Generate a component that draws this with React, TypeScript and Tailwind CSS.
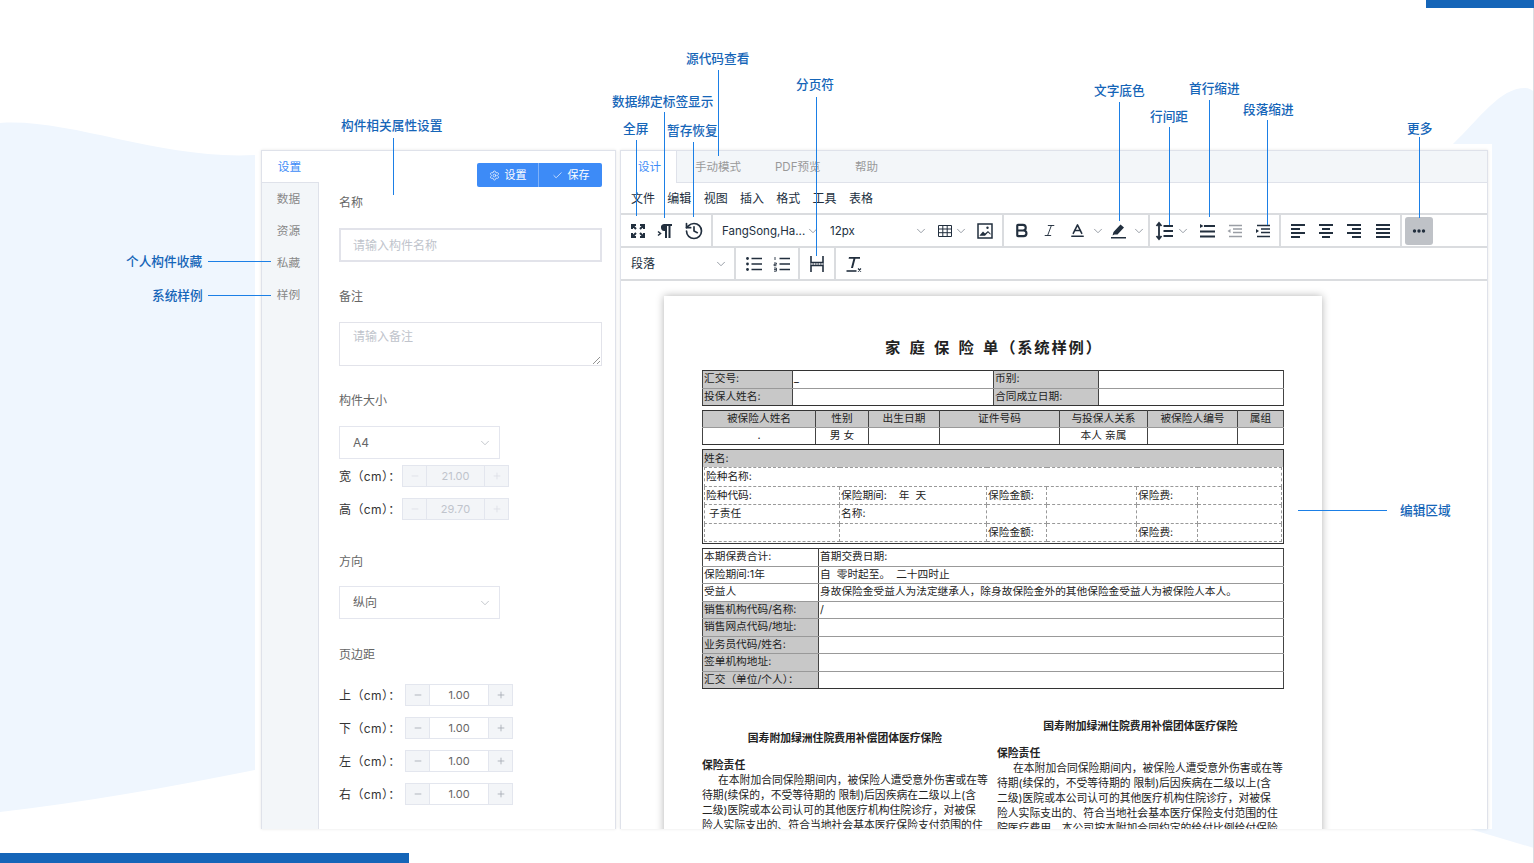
import React from 'react';
import { Bold, Italic, Baseline, ChevronDown, History, Settings, Check, Minus, Plus } from 'lucide-react';

const ink = '#222f3e';

function Glyph({ children }: { children: React.ReactNode }) {
  return (
    <svg width="24" height="24" viewBox="0 0 24 24" fill="none" stroke={ink} strokeWidth="2">
      {children}
    </svg>
  );
}

function Tool({ children, className = '' }: { children: React.ReactNode; className?: string }) {
  return <div className={`flex h-[28px] w-[28px] shrink-0 items-center justify-center ${className}`}>{children}</div>;
}

function Chevron({ size = 14 }: { size?: number }) {
  return <ChevronDown size={size} strokeWidth={1.5} className="shrink-0 text-[#8a919a]" />;
}

function Lines({ rows }: { rows: [number, number, number][] }) {
  return (
    <Glyph>
      {rows.map(([y, a, b]) => (
        <path key={y} d={`M${a} ${y}H${b}`} />
      ))}
    </Glyph>
  );
}

const annotations = [
  { text: '构件相关属性设置', x: 341, y: 117 },
  { text: '源代码查看', x: 686, y: 50 },
  { text: '数据绑定标签显示', x: 612, y: 93 },
  { text: '全屏', x: 623, y: 120 },
  { text: '暂存恢复', x: 667, y: 122 },
  { text: '分页符', x: 796, y: 76 },
  { text: '文字底色', x: 1094, y: 82 },
  { text: '行间距', x: 1150, y: 108 },
  { text: '首行缩进', x: 1189, y: 80 },
  { text: '段落缩进', x: 1243, y: 101 },
  { text: '更多', x: 1407, y: 120 },
  { text: '个人构件收藏', x: 126, y: 253 },
  { text: '系统样例', x: 152, y: 287 },
  { text: '编辑区域', x: 1400, y: 502 },
];

// leader lines, x/y/w/h in page pixels
const leaders = [
  { x: 393, y: 138, w: 1, h: 57 },
  { x: 718, y: 70, w: 1, h: 86 },
  { x: 664, y: 112, w: 1, h: 106 },
  { x: 636, y: 140, w: 1, h: 76 },
  { x: 693, y: 142, w: 1, h: 75 },
  { x: 816, y: 97, w: 1, h: 159 },
  { x: 1119, y: 102, w: 1, h: 119 },
  { x: 1169, y: 127, w: 1, h: 98 },
  { x: 1209, y: 100, w: 1, h: 117 },
  { x: 1267, y: 120, w: 1, h: 105 },
  { x: 1419, y: 137, w: 1, h: 81 },
  { x: 208, y: 261, w: 63, h: 1 },
  { x: 208, y: 295, w: 63, h: 1 },
  { x: 1298, y: 510, w: 89, h: 1 },
];

function Label({ children, className = '' }: { children: React.ReactNode; className?: string }) {
  return <div className={`h-[14px] text-[12px] leading-[16px] text-[#666] ${className}`}>{children}</div>;
}

function SelectBox({ value, className = '' }: { value: string; className?: string }) {
  return (
    <div className={`flex h-[33px] w-[161px] items-center justify-between border border-[#e4e6ee] pl-[13px] pr-[7px] text-[12px] text-[#666] ${className}`}>
      <span className="pt-px">{value}</span>
      <ChevronDown size={14} strokeWidth={1} className="text-[#9aa0a8]" />
    </div>
  );
}

function Stepper({ label, value, disabled, className = '' }: { label: string; value: string; disabled?: boolean; className?: string }) {
  return (
    <div className={`flex h-[22px] items-center ${className}`}>
      <span className={`whitespace-nowrap pt-px text-[12px] tracking-[0.4px] text-[#333] ${disabled ? 'w-[63px]' : 'w-[66px]'}`}>{label}（cm）：</span>
      <div className={`flex h-[22px] border border-[#e3e6ee] text-[11px] ${disabled ? 'w-[107px] bg-[#f3f5f8] text-[#c0c4cc]' : 'w-[108px] text-[#666]'}`}>
        <div className={`flex w-[24px] items-center justify-center border-r border-[#e3e6ee] bg-[#f3f5f8] ${disabled ? 'text-[#dcdfe6]' : 'text-[#a4a9b2]'}`}>
          <Minus size={10} />
        </div>
        <div className="flex flex-1 items-center justify-center">{value}</div>
        <div className={`flex w-[24px] items-center justify-center border-l border-[#e3e6ee] bg-[#f3f5f8] ${disabled ? 'text-[#dcdfe6]' : 'text-[#a4a9b2]'}`}>
          <Plus size={10} />
        </div>
      </div>
    </div>
  );
}

function LeftPanel() {
  return (
    <div className="flex h-full w-[355px] border-x border-t border-[#dfe2ea] shadow-[0_0_3px_rgba(0,0,0,0.1)]">
      <div className="w-[57px] shrink-0 border-r border-[#dfe2ea] bg-[#f3f6f9] text-[11.7px] text-[#888]">
        <div className="-mr-px flex h-[32px] items-center justify-center border-b border-[#dfe2ea] bg-white pr-[3px] pt-[2px] text-[#3d8bf7]">
          <span className="-mr-px">设置</span>
        </div>
        {['数据', '资源', '私藏', '样例'].map((t) => (
          <div key={t} className="flex h-[32px] items-center justify-center pr-[3px] pt-[2px]">{t}</div>
        ))}
      </div>
      <div className="ml-[20px] w-[263px] pt-[12px]">
        <div className="flex justify-end">
          <div className="flex h-[24px] w-[125px] overflow-hidden rounded-[2px] bg-[#3d8bf7] text-[11px] text-white">
            <div className="flex w-[62px] items-center justify-center gap-[5px] border-r border-[#7fb2f9]">
              <Settings size={11} strokeWidth={1.5} />
              设置
            </div>
            <div className="flex flex-1 items-center justify-center gap-[5px]">
              <Check size={11} strokeWidth={1.5} />
              保存
            </div>
          </div>
        </div>
        <Label className="mt-[8px]">名称</Label>
        <div className="mt-[19px] flex h-[34px] items-center border-2 border-[#e2e3ea] pl-[12px] pt-px text-[12px] text-[#c0c4cc]">请输入构件名称</div>
        <Label className="mt-[27px]">备注</Label>
        <div className="relative mt-[19px] h-[44px] border border-[#e2e3ea] pl-[13px] pt-[5px] text-[12px] text-[#c0c4cc]">
          请输入备注
          <svg width="7" height="7" viewBox="0 0 7 7" className="absolute bottom-[1px] right-[1px]" stroke="#777" strokeWidth="0.8">
            <path d="M0 7L7 0M4 7L7 4" />
          </svg>
        </div>
        <Label className="mt-[27px]">构件大小</Label>
        <SelectBox value="A4" className="mt-[19px]" />
        <Stepper label="宽" value="21.00" disabled className="mt-[6px]" />
        <Stepper label="高" value="29.70" disabled className="mt-[11px]" />
        <Label className="mt-[34px]">方向</Label>
        <SelectBox value="纵向" className="mt-[18px]" />
        <Label className="mt-[28px]">页边距</Label>
        <Stepper label="上" value="1.00" className="mt-[23px]" />
        <Stepper label="下" value="1.00" className="mt-[11px]" />
        <Stepper label="左" value="1.00" className="mt-[11px]" />
        <Stepper label="右" value="1.00" className="mt-[11px]" />
      </div>
    </div>
  );
}

function Toolbars() {
  return (
    <>
      <div className="flex h-[32px] bg-[#f3f6f9] text-[11.5px] text-[#999]">
        <div className="flex w-[56px] items-center justify-center border-r border-[#dfe2ea] bg-white pl-[2px] pt-px text-[#3d8bf7]">设计</div>
        <div className="flex flex-1 items-center border-b border-[#dfe2ea] pl-[18px] pt-[2px]">
          <span className="w-[80px]">手动模式</span>
          <span className="w-[80px]">PDF预览</span>
          <span>帮助</span>
        </div>
      </div>
      <div className="flex h-[32px] items-center gap-[12.3px] border-b-2 border-[#dadcdf] pl-[10px] pt-[1px] text-[12px] text-[#222f3e]">
        {['文件', '编辑', '视图', '插入', '格式', '工具', '表格'].map((m) => (
          <span key={m}>{m}</span>
        ))}
      </div>
      <div className="flex h-[33px] items-center border-b-2 border-[#dadcdf]">
        <div className="flex h-full w-[92px] items-center border-r-2 border-[#dadcdf] pl-[3px]">
          <Tool>
            <Glyph>
              <path d="M6 10V6h4M6 6l4 4M14 6h4v4M18 6l-4 4M6 14v4h4M6 18l4-4M14 18h4v-4M18 18l-4-4" />
            </Glyph>
          </Tool>
          <Tool className="!w-[26px]">
            <Glyph>
              <path d="M11 5h8v2h-1.5v12h-2V7h-1.5v12h-2v-7a3.5 3.5 0 0 1-1-7z" fill={ink} stroke="none" />
              <path d="M5 12.5l2.5 2-2.5 2" strokeWidth="1.5" />
            </Glyph>
          </Tool>
          <Tool className="ml-[2px]">
            <History size={20} strokeWidth={2} color={ink} />
          </Tool>
        </div>
        <div className="flex h-full w-[291px] items-center border-r-2 border-[#dadcdf] text-[12px] text-[#222f3e]">
          <div className="ml-[9px] flex w-[98px] items-center justify-between">
            <span className="pt-[2px] text-[11.5px]">FangSong,Ha...</span>
            <Chevron />
          </div>
          <div className="ml-[10px] flex w-[98px] items-center justify-between">
            <span className="pt-[2px] text-[11.5px]">12px</span>
            <Chevron />
          </div>
          <div className="ml-[10px] flex items-center">
            <svg width="14" height="14" viewBox="0 0 14 14" fill="none" stroke={ink} strokeWidth="1">
              <path d="M.5 1.5h13v11H.5zM.5 5h13M.5 8.7h13M4.8 1.5v11M9.2 1.5v11" />
            </svg>
            <span className="ml-[2px]"><Chevron /></span>
          </div>
          <Tool className="ml-[3px]">
            <svg width="16" height="16" viewBox="0 0 16 16" fill="none" stroke={ink} strokeWidth="1.5">
              <path d="M1 1h14v14H1z" />
              <path d="M2.5 12.5L6 8.5l2 2L11 8l2.5 2.5v1.2L11 9.6l-3 3.1H3z" fill={ink} stroke="none" />
              <circle cx="10.5" cy="4.8" r="1.2" fill={ink} stroke="none" />
            </svg>
          </Tool>
        </div>
        <div className="flex h-full w-[146px] items-center border-r-2 border-[#dadcdf] pl-[3px]">
          <Tool><Bold size={17} strokeWidth={3} color={ink} /></Tool>
          <Tool><Italic size={15} strokeWidth={1.5} color={ink} /></Tool>
          <Tool><Baseline size={17} strokeWidth={2.2} color={ink} /></Tool>
          <div className="w-[14px]"><Chevron /></div>
          <Tool className="ml-[-1px]">
            <svg width="17" height="17" viewBox="0 0 17 17" fill={ink}>
              <path d="M3.5 10L10.5 2.5 14 5.5 7.5 12.5H4.5L2.5 13.5zM1 15h15v1.6H1z" />
            </svg>
          </Tool>
          <div className="w-[14px]"><Chevron /></div>
        </div>
        <div className="flex h-full w-[131px] items-center border-r-2 border-[#dadcdf] pl-[2px]">
          <Tool className="!w-[26px]">
            <Glyph>
              <path d="M6 4v16M3.5 7L6 4l2.5 3M3.5 17L6 20l2.5-3M10.5 7H20M10.5 12H20M10.5 17H20" strokeWidth="1.8" />
            </Glyph>
          </Tool>
          <div className="-ml-[2px] w-[14px]"><Chevron /></div>
          <Tool className="ml-[3px]">
            <Glyph>
              <path d="M5 5l3.5 2L5 9z" fill={ink} stroke="none" />
              <path d="M9 7h11M5 12.5h15M5 17.5h15" />
            </Glyph>
          </Tool>
          <Tool>
            <svg width="24" height="24" viewBox="0 0 24 24" fill="none" stroke="#9a9ea5" strokeWidth="1.5">
              <path d="M4.5 12l3-2v4z" fill="#9a9ea5" stroke="none" />
              <path d="M6 6.5h13M10 10h9M10 13.5h9M6 17.5h13" />
            </svg>
          </Tool>
          <Tool>
            <Glyph>
              <path d="M8 12l-3-2v4z" fill={ink} stroke="none" />
              <path d="M6 6.5h13M10 10h9M10 13.5h9M6 17.5h13" strokeWidth="1.6" />
            </Glyph>
          </Tool>
        </div>
        <div className="flex h-full w-[121px] items-center border-r-2 border-[#dadcdf] pl-[3px]">
          <Tool><Lines rows={[[6, 5, 19], [10, 5, 14], [14, 5, 19], [18, 5, 14]]} /></Tool>
          <Tool><Lines rows={[[6, 5, 19], [10, 8, 16], [14, 5, 19], [18, 8, 16]]} /></Tool>
          <Tool><Lines rows={[[6, 5, 19], [10, 10, 19], [14, 5, 19], [18, 10, 19]]} /></Tool>
          <Tool className="ml-[1px]"><Lines rows={[[6, 5, 19], [10, 5, 19], [14, 5, 19], [18, 5, 19]]} /></Tool>
        </div>
        <div className="ml-[3px] flex h-[28px] w-[28px] items-center justify-center rounded-[3px] bg-[#bfc2c7]">
          <svg width="14" height="4" viewBox="0 0 14 4" fill={ink}>
            <circle cx="2.5" cy="2" r="1.7" />
            <circle cx="7" cy="2" r="1.7" />
            <circle cx="11.5" cy="2" r="1.7" />
          </svg>
        </div>
      </div>
      <div className="flex h-[33px] items-center border-b-2 border-[#dadcdf]">
        <div className="flex h-full w-[115px] items-center justify-between border-r-2 border-[#dadcdf] pl-[10px] pr-[6px] text-[12px] text-[#222f3e]">
          <span>段落</span>
          <Chevron />
        </div>
        <div className="flex h-full w-[64px] items-center border-r-2 border-[#dadcdf] pl-[4px]">
          <Tool>
            <Glyph>
              <path d="M9.5 6.5H20M9.5 12H20M9.5 17.5H20" strokeWidth="1.6" />
              <circle cx="5.5" cy="6.5" r="1.4" fill={ink} stroke="none" />
              <circle cx="5.5" cy="12" r="1.4" fill={ink} stroke="none" />
              <circle cx="5.5" cy="17.5" r="1.4" fill={ink} stroke="none" />
            </Glyph>
          </Tool>
          <Tool>
            <Glyph>
              <path d="M9.5 6.5H20M9.5 12H20M9.5 17.5H20" strokeWidth="1.6" />
              <path d="M5 5v3M4 11h2.4v1.3H4v1.4h2.4M4 16h2.4v3.2H4M4 17.6h2.4" strokeWidth="0.9" />
            </Glyph>
          </Tool>
        </div>
        <div className="flex h-full w-[36px] items-center justify-center border-r-2 border-[#dadcdf]">
          <Glyph>
            <path d="M6 4v6.5h12V4M6 20v-6.5h12V20" strokeWidth="1.6" />
            <path d="M5 12h14" strokeWidth="1" strokeDasharray="1.5 1" />
          </Glyph>
        </div>
        <Tool className="ml-[3px]">
          <Glyph>
            <path d="M8 5h11v1.8h-4.6L12 16h-2l2.4-9.2H7.6z" fill={ink} stroke="none" />
            <path d="M5.5 19h10" strokeWidth="1.6" />
            <path d="M17 16.5l3 3M20 16.5l-3 3" strokeWidth="1.1" />
          </Glyph>
        </Tool>
      </div>
    </>
  );
}

// dark verticals with lighter row rules, the outer edge stays dark
const cell = 'border border-x-[#444] border-y-[#999] px-px align-middle';
const edge = '[&_tr:first-child>td]:border-t-[#333] [&_tr:last-child>td]:border-b-[#333]';
const grey = 'bg-[#c8c8c8]';
const dash = 'border border-dashed border-[#999] px-px pt-px align-middle';

function InsuranceTables() {
  return (
    <div className="w-[582px] text-[10.7px] leading-[14px] text-[#222]">
      <table className={`h-[36px] w-full table-fixed border-collapse ${edge}`}>
        <colgroup>
          <col className="w-[90px]" />
          <col className="w-[201px]" />
          <col className="w-[105px]" />
          <col />
        </colgroup>
        <tbody>
          <tr>
            <td className={`${cell} ${grey}`}>汇交号:</td>
            <td className={cell}>_</td>
            <td className={`${cell} ${grey}`}>币别:</td>
            <td className={cell}></td>
          </tr>
          <tr>
            <td className={`${cell} ${grey}`}>投保人姓名:</td>
            <td className={cell}></td>
            <td className={`${cell} ${grey}`}>合同成立日期:</td>
            <td className={cell}></td>
          </tr>
        </tbody>
      </table>

      <table className={`mt-[4px] h-[35px] w-full table-fixed border-collapse text-center ${edge}`}>
        <colgroup>
          <col className="w-[113px]" />
          <col className="w-[53px]" />
          <col className="w-[71px]" />
          <col className="w-[120px]" />
          <col className="w-[88px]" />
          <col className="w-[90px]" />
          <col />
        </colgroup>
        <tbody>
          <tr className={grey}>
            {['被保险人姓名', '性别', '出生日期', '证件号码', '与投保人关系', '被保险人编号', '属组'].map((t) => (
              <td key={t} className={cell}>{t}</td>
            ))}
          </tr>
          <tr>
            <td className={cell}>.</td>
            <td className={cell}>男 女</td>
            <td className={cell}></td>
            <td className={cell}></td>
            <td className={cell}>本人 亲属</td>
            <td className={cell}></td>
            <td className={cell}></td>
          </tr>
        </tbody>
      </table>

      <div className="mt-[4px] h-[95px] border border-[#333]">
        <div className={`h-[17px] px-px leading-[17px] ${grey}`}>姓名:</div>
        <table className="mx-px h-[75px] w-[578px] table-fixed border-collapse">
          <colgroup>
            <col className="w-[135px]" />
            <col className="w-[147px]" />
            <col className="w-[60px]" />
            <col className="w-[90px]" />
            <col className="w-[61px]" />
            <col />
          </colgroup>
          <tbody>
            <tr>
              <td colSpan={6} className={dash}>险种名称:</td>
            </tr>
            <tr>
              <td className={dash}>险种代码:</td>
              <td className={dash}>保险期间:&nbsp;&nbsp;&nbsp;&nbsp;年&nbsp;&nbsp;天</td>
              <td className={`${dash} whitespace-nowrap`}>保险金额:</td>
              <td className={dash}></td>
              <td className={dash}>保险费:</td>
              <td className={dash}></td>
            </tr>
            <tr>
              <td className={`${dash} pl-[4px]`}>子责任</td>
              <td className={dash}>名称:</td>
              <td className={dash}></td>
              <td className={dash}></td>
              <td className={dash}></td>
              <td className={dash}></td>
            </tr>
            <tr>
              <td className={dash}></td>
              <td className={dash}></td>
              <td className={`${dash} whitespace-nowrap`}>保险金额:</td>
              <td className={dash}></td>
              <td className={dash}>保险费:</td>
              <td className={dash}></td>
            </tr>
          </tbody>
        </table>
      </div>

      <table className={`mt-[4px] h-[141px] w-full table-fixed border-collapse ${edge}`}>
        <colgroup>
          <col className="w-[116px]" />
          <col />
        </colgroup>
        <tbody>
          <tr>
            <td className={cell}>本期保费合计:</td>
            <td className={cell}>首期交费日期:</td>
          </tr>
          <tr>
            <td className={cell}>保险期间:1年</td>
            <td className={cell}>自&nbsp;&nbsp;零时起至。&nbsp;&nbsp;二十四时止</td>
          </tr>
          <tr>
            <td className={cell}>受益人</td>
            <td className={`${cell} whitespace-nowrap`}>身故保险金受益人为法定继承人，除身故保险金外的其他保险金受益人为被保险人本人。</td>
          </tr>
          {[
            ['销售机构代码/名称:', '/'],
            ['销售网点代码/地址:', ''],
            ['业务员代码/姓名:', ''],
            ['签单机构地址:', ''],
            ['汇交（单位/个人）：', ''],
          ].map(([a, b]) => (
            <tr key={a}>
              <td className={`${cell} ${grey} whitespace-nowrap`}>{a}</td>
              <td className={cell}>{b}</td>
            </tr>
          ))}
        </tbody>
      </table>
    </div>
  );
}

function Clause({ lines, className = '' }: { lines: string[]; className?: string }) {
  return (
    <div className={`text-[10.8px] leading-[15px] text-[#222] ${className}`}>
      <div className="text-center font-bold">国寿附加绿洲住院费用补偿团体医疗保险</div>
      <div className="mt-[12px] font-bold">保险责任</div>
      {lines.map((l, i) => (
        <div key={l} className={`whitespace-nowrap ${i === 0 ? 'pl-[16px]' : ''}`}>{l}</div>
      ))}
    </div>
  );
}

function RightPanel() {
  return (
    <div className="flex h-full w-[868px] flex-col overflow-hidden border-x border-t border-[#dfe2ea] shadow-[0_0_3px_rgba(0,0,0,0.1)]">
      <Toolbars />
      <div className="min-h-0 flex-1 overflow-hidden bg-white pl-[43px] pt-[15px]">
        <div className="h-[640px] w-[658px] bg-white px-[38px] pt-[41px] shadow-[0_0_8px_rgba(0,0,0,0.3)]">
          <div className="h-[22px] whitespace-nowrap pl-[183px] text-[15.3px] font-bold leading-[22px] tracking-[1.8px] text-[#222] [word-spacing:2px]">家 庭 保 险 单（系统样例）</div>
          <div className="mt-[11px]">
            <InsuranceTables />
          </div>
          <div className="flex gap-[9px]">
            <Clause
              className="mt-[42px] w-[286px]"
              lines={[
                '在本附加合同保险期间内，被保险人遭受意外伤害或在等',
                '待期(续保的，不受等待期的 限制)后因疾病在二级以上(含',
                '二级)医院或本公司认可的其他医疗机构住院诊疗，对被保',
                '险人实际支出的、符合当地社会基本医疗保险支付范围的住',
              ]}
            />
            <Clause
              className="mt-[30px] w-[287px]"
              lines={[
                '在本附加合同保险期间内，被保险人遭受意外伤害或在等',
                '待期(续保的，不受等待期的 限制)后因疾病在二级以上(含',
                '二级)医院或本公司认可的其他医疗机构住院诊疗，对被保',
                '险人实际支出的、符合当地社会基本医疗保险支付范围的住',
                '院医疗费用，本公司按本附加合同约定的给付比例给付保险',
              ]}
            />
          </div>
        </div>
      </div>
    </div>
  );
}

export default function App() {
  return (
    <div className="relative h-[863px] w-[1534px] overflow-hidden bg-white font-['Inter','Noto_Sans_CJK_SC',sans-serif]">
      <svg className="absolute inset-0" width="1534" height="863" viewBox="0 0 1534 863" fill="#eff6fe">
        <path d="M0 123C70 118 160 160 255 155V770C170 787 80 803 0 812Z" />
        <path d="M1453 144C1480 118 1500 88 1525 88C1529 88 1532 90 1534 92V848L1470 829H1453Z" />
      </svg>
      <div className="absolute right-0 top-0 h-full w-px bg-[#dcdee3]" />
      <div className="absolute right-0 top-0 h-[8px] w-[108px] bg-[#1565b8]" />
      <div className="absolute bottom-0 left-0 h-[10px] w-[409px] bg-[#1565b8]" />

      <div className="relative pl-[255px] pt-[144px]">
        <div className="flex h-[685px] w-[1237px] gap-[4px] bg-white pl-[6px] pr-[4px] pt-[6px]">
          <LeftPanel />
          <RightPanel />
        </div>
      </div>

      {leaders.map((l) => (
        <div
          key={`${l.x}-${l.y}`}
          className="absolute bg-[#1b7fe6]"
          style={{ left: l.x, top: l.y, width: l.w, height: l.h }}
        />
      ))}
      {annotations.map((a) => (
        <div
          key={a.text}
          className="absolute whitespace-nowrap text-[12.7px] font-medium leading-[16px] text-[#1565b8]"
          style={{ left: a.x, top: a.y + 1 }}
        >
          {a.text}
        </div>
      ))}
    </div>
  );
}
